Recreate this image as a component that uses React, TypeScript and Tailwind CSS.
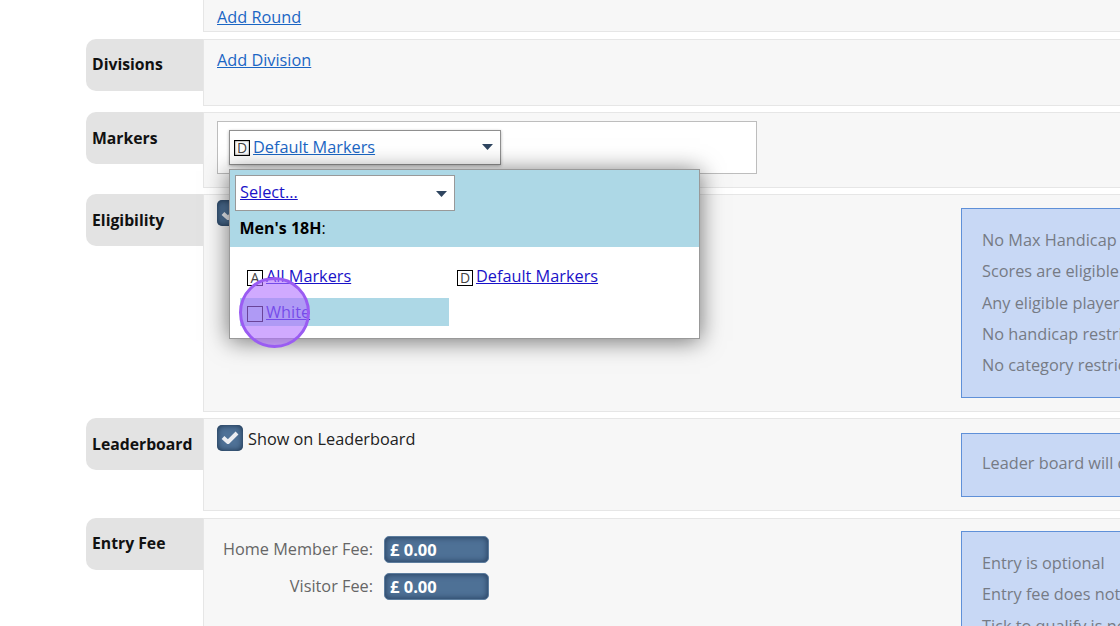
import React from "react";

const font = { fontFamily: '"Open Sans", "Noto Sans", sans-serif' };

function Arrow({ className }: { className: string }) {
  return (
    <svg className={className} width="11" height="6" viewBox="0 0 11 6">
      <path d="M0 0H11L5.5 6Z" fill="#2f4560" />
    </svg>
  );
}

function Row({
  label,
  height,
  labelClass,
  children,
  info,
  infoTop,
}: {
  label: string;
  height: string;
  labelClass?: string;
  children?: React.ReactNode;
  info?: React.ReactNode;
  infoTop?: string;
}) {
  return (
    <div className={`flex ${height}`}>
      <div className="w-[117px] h-[52px] shrink-0 rounded-l-[10px] bg-[#e3e3e3] pl-[6px] flex items-center text-[15.75px] font-bold text-[#111]">
        <span className={labelClass ?? "pt-[1px]"}>{label}</span>
      </div>
      <div className="flex-1 min-w-0 flex overflow-hidden bg-[#f7f7f7] border border-[#e6e6e6] border-r-0 pl-[13px]">
        <div className="w-[744px] shrink-0">{children}</div>
        {info && <div className={`w-[400px] shrink-0 ${infoTop}`}>{info}</div>}
      </div>
    </div>
  );
}

function InfoBox({ lines, className }: { lines: string[]; className: string }) {
  return (
    <div className={`bg-[#c8d8f5] border border-[#5f90d8] pl-[20px] text-[16.3px] text-[#767b85] leading-[31.3px] whitespace-nowrap ${className}`}>
      {lines.map((l) => (
        <div key={l}>{l}</div>
      ))}
    </div>
  );
}

function Check() {
  return (
    <span className="w-[26px] h-[26px] rounded-[5px] bg-[#4f7297] shadow-[inset_0_0_6px_rgba(15,35,60,0.9)] flex items-center justify-center shrink-0">
      <svg width="18" height="15" viewBox="0 0 18 15">
        <path d="M2 7.5L7 12L16 3" fill="none" stroke="#eceef2" strokeWidth="4" strokeLinejoin="round" />
      </svg>
    </span>
  );
}

function Marker({ letter, className }: { letter?: string; className: string }) {
  return (
    <span className={`w-[16px] h-[16px] border border-black flex items-center justify-center text-[14px] leading-none text-[#444] shrink-0 ${className}`}>
      {letter}
    </span>
  );
}

function Fee({ label, className }: { label: string; className: string }) {
  return (
    <div className={`flex items-center ${className}`}>
      <span className="w-[156px] text-right text-[16.3px] text-[#666]">{label}</span>
      <span className="ml-[11px] w-[105px] h-[27px] rounded-[5px] bg-[#4e7196] border border-[#5d7d9e] shadow-[inset_0_0_6px_rgba(20,40,70,0.8)] text-white font-bold text-[16.5px] leading-[25px] pl-[5px]">
        £ 0.00
      </span>
    </div>
  );
}

export default function App() {
  return (
    <div className="relative w-[1120px] h-[626px] overflow-hidden bg-white pl-[86px] flex flex-col gap-[7px]" style={font}>
      <div className="h-[32px] shrink-0 flex">
        <div className="w-[117px] shrink-0" />
        <div className="flex-1 bg-[#f7f7f7] border-l border-b border-[#e6e6e6] pl-[13px] pt-[5px] text-[16.3px] leading-[24px]">
          <a className="text-[#1b66c4] underline">Add Round</a>
        </div>
      </div>

      <Row label="Divisions" labelClass="" height="h-[67px] shrink-0 -mb-px">
        <div className="pt-[8px] text-[16.3px] leading-[24px]">
          <a className="text-[#1b66c4] underline">Add Division</a>
        </div>
      </Row>

      <Row label="Markers" height="h-[76px] shrink-0 -mb-px">
        <div className="mt-[8px] w-[540px] h-[53px] bg-white border border-[#bdbdbd] pl-[11px] pt-[8px]">
          <div className="relative w-[272px] h-[35px] bg-white border border-[#8f8f8f] flex items-center pl-[4px] shadow-[0_1px_3px_rgba(0,0,0,0.3)]">
            <Marker letter="D" className="border-[#333] shadow-[inset_0_0_2px_rgba(0,0,0,0.7)]" />
            <a className="ml-[3px] text-[16.3px] text-[#1b66c4] underline">Default Markers</a>
            <Arrow className="absolute right-[7px] top-[13px]" />
          </div>
        </div>
      </Row>

      <Row
        label="Eligibility"
        height="h-[218px] shrink-0 -mb-px"
        infoTop="pt-[13px]"
        info={
          <InfoBox
            className="h-[190px] pt-[16px]"
            lines={[
              "No Max Handicap Limit Set",
              "Scores are eligible for handicap",
              "Any eligible player can enter",
              "No handicap restrictions apply",
              "No category restrictions apply",
            ]}
          />
        }
      >
        <div className="pt-[5px]">
          <Check />
        </div>
      </Row>

      <Row
        label="Leaderboard"
        height="h-[93px] shrink-0"
        infoTop="pt-[14px]"
        info={<InfoBox className="h-[64px] pt-[14px]" lines={["Leader board will display results"]} />}
      >
        <div className="pt-[5px] flex items-center gap-[5px] text-[16.3px] text-[#222]">
          <Check />
          <span className="pt-[3px]">Show on Leaderboard</span>
        </div>
      </Row>

      <Row
        label="Entry Fee"
        labelClass="pb-[1px]"
        height="h-[140px] shrink-0"
        infoTop="pt-[12px]"
        info={
          <InfoBox
            className="h-[130px] pt-[16px]"
            lines={["Entry is optional", "Entry fee does not include green fees", "Tick to qualify is not required"]}
          />
        }
      >
        <div className="pt-[17px]">
          <Fee label="Home Member Fee:" className="" />
          <Fee label="Visitor Fee:" className="mt-[10px]" />
        </div>
      </Row>

      {/* Dropdown popup */}
      <div className="absolute left-[229px] top-[169px] w-[471px] h-[170px] border border-[#999] bg-white shadow-[0_2px_22px_rgba(0,0,0,0.55)]">
        <div className="h-[77px] bg-[#add8e6] pl-[5px] pt-[5px]">
          <div className="relative w-[220px] h-[36px] bg-white border border-[#999] pl-[4px] text-[16.3px] leading-[33px]">
            <a className="text-[#1a12c8] underline">Select...</a>
            <Arrow className="absolute right-[7px] top-[15px]" />
          </div>
          <div className="pl-[4.5px] text-[16px] leading-[34px] text-black">
            <b>Men's 18H</b>:
          </div>
        </div>
        <div className="grid grid-cols-[210px_210px] gap-y-[8px] pl-[10px] pt-[15px] text-[16.3px]">
          <div className="h-[28px] flex items-center pl-[7px]">
            <Marker letter="A" className="mt-[3px]" />
            <a className="ml-[3px] text-[#1a12c8] underline">All Markers</a>
          </div>
          <div className="h-[28px] flex items-center pl-[7px]">
            <Marker letter="D" className="mt-[3px]" />
            <a className="ml-[3px] text-[#1a12c8] underline">Default Markers</a>
          </div>
          <div className="h-[28px] w-[209px] bg-[#add8e6] flex items-center pl-[7px]">
            <Marker className="mt-[3px]" />
            <a className="ml-[3px] text-[#1a12c8] underline">White</a>
          </div>
        </div>
      </div>

      {/* Click highlight */}
      <div className="absolute left-[239px] top-[277px] w-[71px] h-[71px] rounded-full bg-[rgba(177,113,255,0.6)] border-[3px] border-[#9a5cf2]" />
    </div>
  );
}
